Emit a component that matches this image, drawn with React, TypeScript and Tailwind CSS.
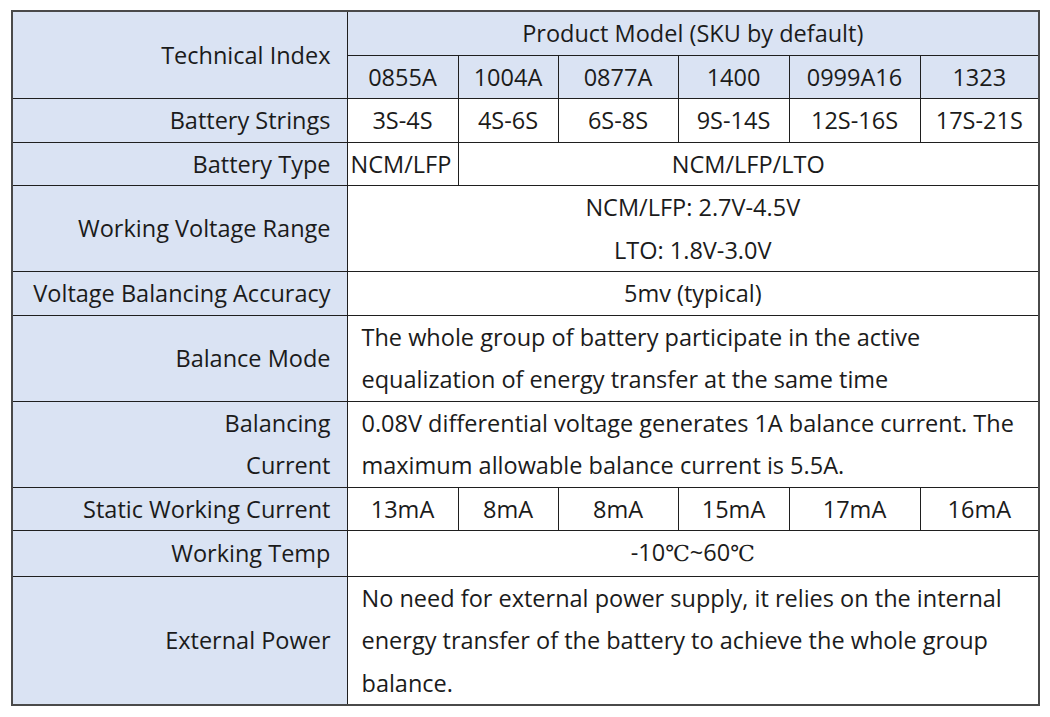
import React from "react";

const models = ["0855A", "1004A", "0877A", "1400", "0999A16", "1323"];
const strings = ["3S-4S", "4S-6S", "6S-8S", "9S-14S", "12S-16S", "17S-21S"];
const staticCurrent = ["13mA", "8mA", "8mA", "15mA", "17mA", "16mA"];

const label = "bg-[#dae3f3] text-right pr-[16px] pl-2 border border-[#1f1f1f] align-middle whitespace-nowrap";
const cell = "border border-[#1f1f1f] text-center align-middle px-1 whitespace-nowrap";
const para = "border border-[#1f1f1f] text-left align-middle pl-[14px] pr-2 whitespace-nowrap";

function Deg() {
  return (
    <span className="font-['Liberation_Serif','DejaVu_Serif','Noto_Sans_CJK_SC',serif] font-light text-[22px]">
      ℃
    </span>
  );
}

export default function App() {
  return (
    <div className="w-[1050px] h-[717px] bg-white pt-[10px] pl-[11px]">
      <table className="border-collapse border-2 border-[#4a4a4a] w-[1027px] table-fixed font-['Open_Sans','Lato',sans-serif] text-[23.5px] leading-[42.5px] text-[#1b1b1b]">
        <colgroup>
          <col className="w-[335px]" />
          <col className="w-[111px]" />
          <col className="w-[100px]" />
          <col className="w-[120px]" />
          <col className="w-[111px]" />
          <col className="w-[131px]" />
          <col className="w-[119px]" />
        </colgroup>
        <tbody>
          <tr>
            <td rowSpan={2} className={label}>
              Technical Index
            </td>
            <td colSpan={6} className={`${cell} bg-[#dae3f3]`}>
              Product Model (SKU by default)
            </td>
          </tr>
          <tr>
            {models.map((m) => (
              <td key={m} className={`${cell} bg-[#dae3f3]`}>
                {m}
              </td>
            ))}
          </tr>
          <tr>
            <td className={label}>Battery Strings</td>
            {strings.map((s) => (
              <td key={s} className={cell}>
                {s}
              </td>
            ))}
          </tr>
          <tr>
            <td className={label}>Battery Type</td>
            <td className={`${cell} px-0 text-left pl-[3px]`}>NCM/LFP</td>
            <td colSpan={5} className={cell}>
              NCM/LFP/LTO
            </td>
          </tr>
          <tr>
            <td className={label}>Working Voltage Range</td>
            <td colSpan={6} className={cell}>
              <div>NCM/LFP: 2.7V-4.5V</div>
              <div>LTO: 1.8V-3.0V</div>
            </td>
          </tr>
          <tr>
            <td className={label}>Voltage Balancing Accuracy</td>
            <td colSpan={6} className={cell}>
              5mv (typical)
            </td>
          </tr>
          <tr>
            <td className={label}>Balance Mode</td>
            <td colSpan={6} className={para}>
              The whole group of battery participate in the active
              <br />
              equalization of energy transfer at the same time
            </td>
          </tr>
          <tr>
            <td className={label}>
              <div>Balancing</div>
              <div>Current</div>
            </td>
            <td colSpan={6} className={para}>
              0.08V differential voltage generates 1A balance current. The
              <br />
              maximum allowable balance current is 5.5A.
            </td>
          </tr>
          <tr>
            <td className={label}>Static Working Current</td>
            {staticCurrent.map((s, i) => (
              <td key={i} className={cell}>
                {s}
              </td>
            ))}
          </tr>
          <tr>
            <td className={label}>Working Temp</td>
            <td colSpan={6} className={cell}>
              -10<Deg />~60<Deg />
            </td>
          </tr>
          <tr>
            <td className={label}>External Power</td>
            <td colSpan={6} className={para}>
              No need for external power supply, it relies on the internal
              <br />
              energy transfer of the battery to achieve the whole group
              <br />
              balance.
            </td>
          </tr>
        </tbody>
      </table>
    </div>
  );
}
